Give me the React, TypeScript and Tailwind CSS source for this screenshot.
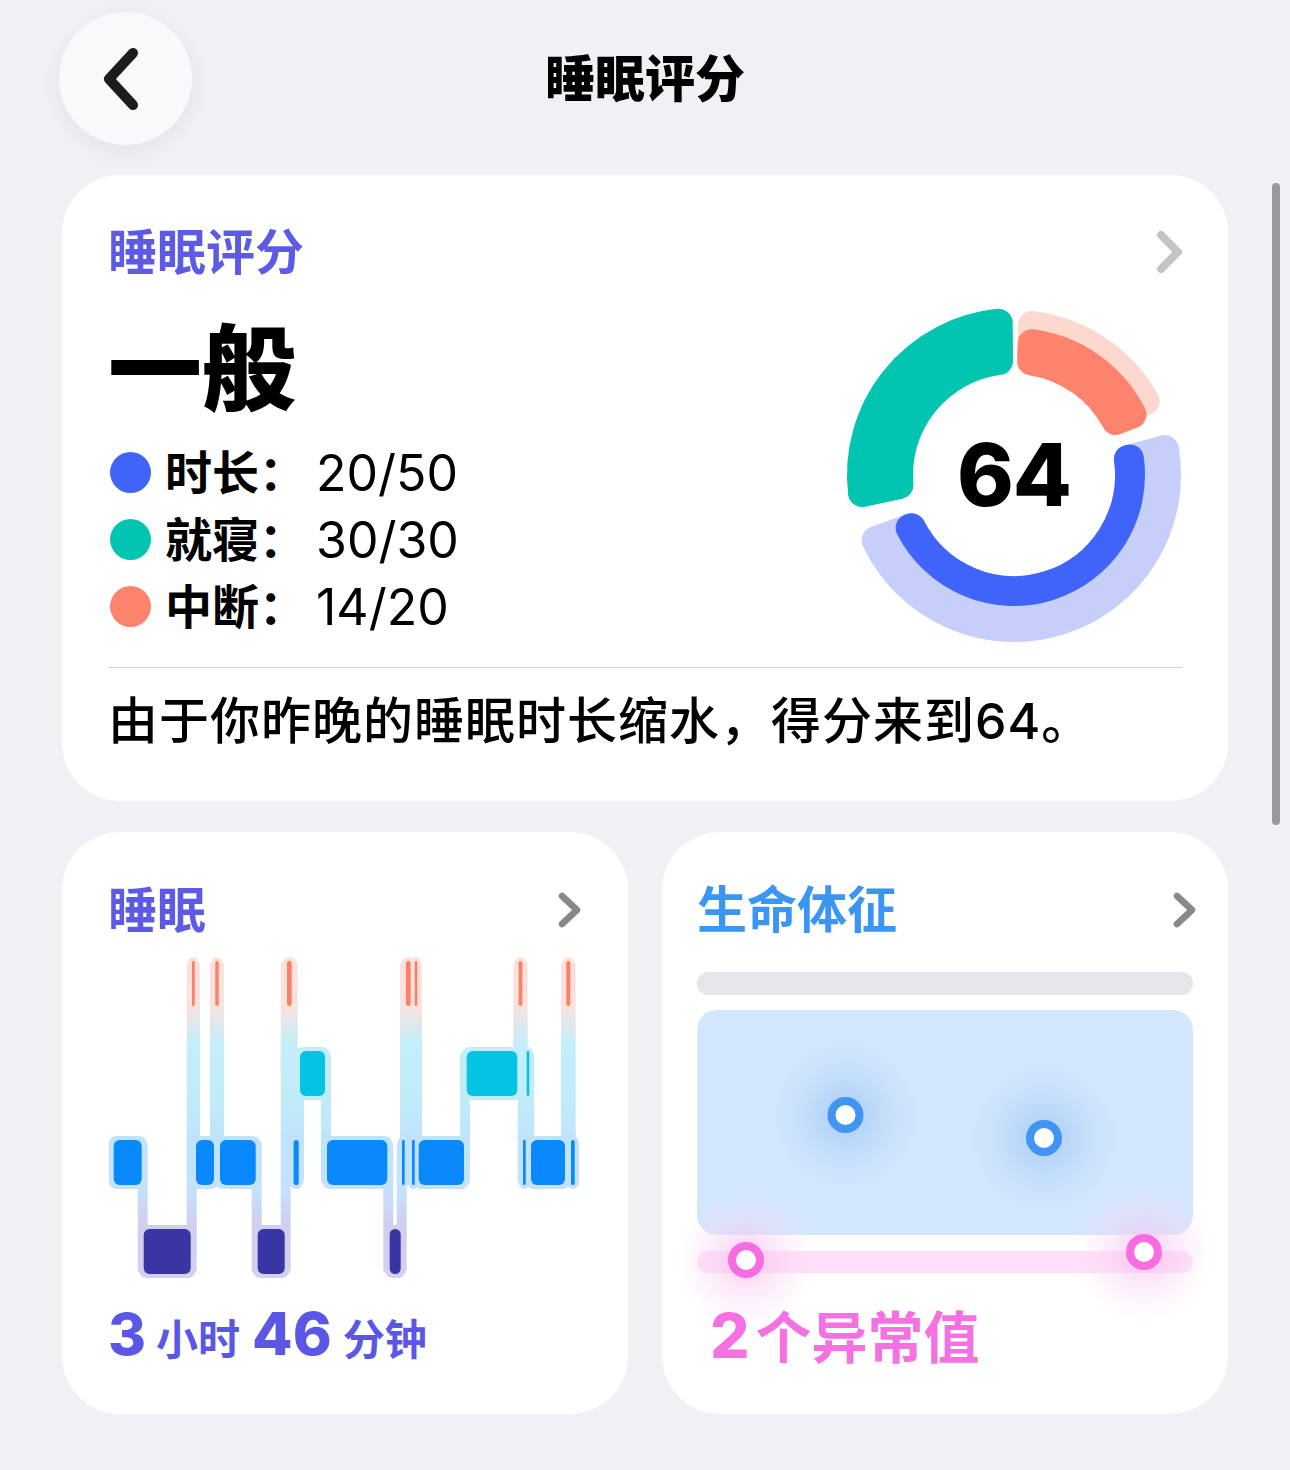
import React from "react";

type Stage = "awake" | "rem" | "core" | "deep";

const LEVELS: Record<Stage, [number, number]> = {
  awake: [962, 1007],
  rem: [1052, 1097],
  core: [1141, 1186],
  deep: [1230, 1275],
};

const STAGE_FILL: Record<Stage, string> = {
  awake: "#fa806a",
  rem: "#05c3e4",
  core: "#0a89fb",
  deep: "#3935a4",
};

// [stage, start x, end x] along the night
const SEGMENTS: [Stage, number, number][] = [
  ["core", 112.7, 142.7],
  ["deep", 142.7, 191.7],
  ["awake", 191.7, 195],
  ["core", 195, 215],
  ["awake", 215, 219],
  ["core", 219, 256.7],
  ["deep", 256.7, 285.7],
  ["awake", 286, 292.7],
  ["core", 293.3, 299],
  ["rem", 299, 326],
  ["core", 326, 388.3],
  ["deep", 388.7, 401.7],
  ["core", 401.7, 405],
  ["awake", 405, 411.7],
  ["core", 411.7, 415],
  ["awake", 415, 417],
  ["core", 417.7, 465],
  ["rem", 465.7, 518.3],
  ["awake", 518.3, 522.7],
  ["core", 522.7, 526],
  ["rem", 526.7, 529.3],
  ["core", 530, 566],
  ["awake", 566, 570.7],
  ["core", 570.7, 575],
];

function Hypnogram() {
  return (
    <svg width={490} height={340} viewBox="100 950 490 340" className="block -ml-[8px] mt-[15px]">
      <defs>
        <linearGradient id="sleepHalo" gradientUnits="userSpaceOnUse" x1="0" y1="956" x2="0" y2="1282">
          <stop offset="0" stopColor="#fde0da" />
          <stop offset="0.15" stopColor="#fbe2de" />
          <stop offset="0.27" stopColor="#c4eef9" />
          <stop offset="0.44" stopColor="#c0ecf8" />
          <stop offset="0.56" stopColor="#c0e3fd" />
          <stop offset="0.71" stopColor="#c4e2fd" />
          <stop offset="0.83" stopColor="#cfcfee" />
          <stop offset="1" stopColor="#d3d1ef" />
        </linearGradient>
      </defs>
      <g fill="url(#sleepHalo)">
        {SEGMENTS.map(([s, x0, x1], i) => {
          const [y0, y1] = LEVELS[s];
          return <rect key={`h${i}`} x={x0 - 4} y={y0 - 4} width={x1 - x0 + 8} height={y1 - y0 + 8} rx={8} />;
        })}
        {SEGMENTS.slice(0, -1).map(([s, , x1], i) => {
          const next = SEGMENTS[i + 1][0];
          const top = Math.min(LEVELS[s][0], LEVELS[next][0]);
          const bottom = Math.max(LEVELS[s][1], LEVELS[next][1]);
          return <rect key={`c${i}`} x={x1 - 5} y={top} width={10} height={bottom - top} rx={5} />;
        })}
      </g>
      {SEGMENTS.map(([s, x0, x1], i) => {
        const [y0, y1] = LEVELS[s];
        const full = x1 - x0;
        const w = full > 6 ? full - 2 : Math.max(full - 0.6, 2.6);
        const x = x0 + (full - w) / 2;
        return (
          <rect
            key={`s${i}`}
            x={x}
            y={y0}
            width={w}
            height={y1 - y0}
            rx={Math.min(6, w / 2)}
            fill={STAGE_FILL[s]}
          />
        );
      })}
    </svg>
  );
}

// annular sector with rounded corners: inset geometry, then a round-joined stroke of width 2c
function sectorPath(cx: number, cy: number, r0: number, r1: number, a0: number, a1: number, c: number) {
  const ri = r0 + c;
  const ro = r1 - c;
  const rad = (d: number) => (d * Math.PI) / 180;
  const off = (r: number) => (Math.asin(Math.min(1, c / r)) * 180) / Math.PI;
  const pt = (r: number, a: number) => `${cx + r * Math.sin(rad(a))} ${cy - r * Math.cos(rad(a))}`;
  const so = a0 + off(ro);
  const eo = a1 - off(ro);
  const si = a0 + off(ri);
  const ei = a1 - off(ri);
  const lo = eo - so > 180 ? 1 : 0;
  const li = ei - si > 180 ? 1 : 0;
  if (ro - ri < 0.5) {
    return `M${pt(ro, so)} A${ro} ${ro} 0 ${lo} 1 ${pt(ro, eo)}`;
  }
  return `M${pt(ro, so)} A${ro} ${ro} 0 ${lo} 1 ${pt(ro, eo)} L${pt(ri, ei)} A${ri} ${ri} 0 ${li} 0 ${pt(ri, si)} Z`;
}

function Arc({ r0, r1, a0, a1, color, c = 14 }: { r0: number; r1: number; a0: number; a1: number; color: string; c?: number }) {
  const cc = Math.min(c, (r1 - r0) / 2);
  return (
    <path
      d={sectorPath(170, 170, r0, r1, a0, a1, cc)}
      fill={color}
      stroke={color}
      strokeWidth={cc * 2}
      strokeLinejoin="round"
      strokeLinecap="round"
    />
  );
}

function ScoreRing() {
  return (
    <div className="relative -mr-[2px] mt-[29px] h-[340px] w-[340px] shrink-0">
      <svg width={340} height={340} viewBox="0 0 340 340" className="block">
        <Arc r0={101} r1={167} a0={75} a1={250} color="#c6cffa" />
        <Arc r0={101} r1={131} a0={75} a1={250} color="#4064f9" />
        <Arc r0={101} r1={167} a0={258} a1={359.5} color="#02c5b1" />
        <Arc r0={101} r1={165} a0={1.6} a1={66} color="#fdd8cf" />
        <Arc r0={101} r1={147} a0={1.6} a1={69} color="#fd836d" />
      </svg>
      <div className="absolute inset-0 flex items-center justify-center">
        <span className="text-[86px] font-extrabold leading-none tracking-[-1px] text-black">64</span>
      </div>
    </div>
  );
}

function VitalsChart() {
  return (
    <svg width={530} height={335} viewBox="680 955 530 335" className="block -ml-[17px] mt-[20px] overflow-visible">
      <defs>
        <radialGradient id="blueGlow">
          <stop offset="0" stopColor="#a6cbf7" stopOpacity="1" />
          <stop offset="0.35" stopColor="#b3d3f8" stopOpacity="0.7" />
          <stop offset="1" stopColor="#c6def9" stopOpacity="0" />
        </radialGradient>
        <radialGradient id="pinkGlow">
          <stop offset="0" stopColor="#f7b6ed" stopOpacity="0.8" />
          <stop offset="0.4" stopColor="#f9c8f1" stopOpacity="0.45" />
          <stop offset="1" stopColor="#fbdcf6" stopOpacity="0" />
        </radialGradient>
      </defs>
      <rect x={697} y={973} width={496} height={23} rx={11.5} fill="#e5e5ea" />
      <rect x={697} y={1011} width={496} height={225} rx={20} fill="#d3e7fc" />
      <circle cx={845.5} cy={1116} r={80} fill="url(#blueGlow)" />
      <circle cx={1044} cy={1139} r={80} fill="url(#blueGlow)" />
      <rect x={697} y={1252} width={496} height={22} rx={11} fill="#fde0f8" />
      <circle cx={746} cy={1261} r={70} fill="url(#pinkGlow)" />
      <circle cx={1144} cy={1253} r={70} fill="url(#pinkGlow)" />
      <circle cx={845.5} cy={1116} r={14} fill="#ffffff" stroke="#3f95f1" strokeWidth={8} />
      <circle cx={1044} cy={1139} r={14} fill="#ffffff" stroke="#3f95f1" strokeWidth={8} />
      <circle cx={746} cy={1261} r={14} fill="#ffffff" stroke="#f76de1" strokeWidth={8} />
      <circle cx={1144} cy={1253} r={14} fill="#ffffff" stroke="#f76de1" strokeWidth={8} />
    </svg>
  );
}

function ChevronRight({ light }: { light?: boolean }) {
  return light ? (
    <svg width={34} height={48} viewBox="0 0 34 48" className="block">
      <path d="M9 7 L26 24 L9 41" fill="none" stroke="#c4c4c8" strokeWidth={8} strokeLinecap="round" strokeLinejoin="round" />
    </svg>
  ) : (
    <svg width={28} height={42} viewBox="0 0 28 42" className="block">
      <path d="M6 7 L21 21 L6 35" fill="none" stroke="#88888c" strokeWidth={6.5} strokeLinecap="round" strokeLinejoin="round" />
    </svg>
  );
}

const LEGEND = [
  { label: "时长：", value: "20/50", color: "bg-[#4064f9]" },
  { label: "就寝：", value: "30/30", color: "bg-[#02c5b1]" },
  { label: "中断：", value: "14/20", color: "bg-[#fd836d]" },
];

export default function App() {
  return (
    <div className="relative min-h-[1470px] w-[1290px] overflow-hidden bg-[#f0f0f5] font-[family-name:Inter,'Noto_Sans_CJK_SC',sans-serif] text-black">
      {/* navigation bar */}
      <div className="grid grid-cols-[133px_1fr_133px] items-center px-[59px] pt-[12px]">
        <button className="flex h-[133px] w-[133px] items-center justify-center rounded-full bg-[#f9f9fb] shadow-[0_6px_24px_rgba(0,0,0,0.06)]">
          <svg width={44} height={68} viewBox="0 0 44 68" className="mr-[12px] block">
            <path d="M35 8 L11 34 L35 60" fill="none" stroke="#1c1c1e" strokeWidth={10} strokeLinecap="round" strokeLinejoin="round" />
          </svg>
        </button>
        <h1 className="text-center text-[50px] font-black leading-none">睡眠评分</h1>
        <div />
      </div>

      {/* score card */}
      <section className="mx-[62px] mt-[30px] rounded-[58px] bg-white px-[46px] pb-[55px] pt-[53px]">
        <div className="flex h-[48px] items-center justify-between">
          <h2 className="text-[49px] font-bold leading-none text-[#5d5ae6]">睡眠评分</h2>
          <div className="-mr-[4px]">
            <ChevronRight light />
          </div>
        </div>
        <div className="flex items-start justify-between">
          <div className="pt-[47px]">
            <div className="text-[94px] font-black leading-none">一般</div>
            <div className="mt-[22px]">
              {LEGEND.map((row) => (
                <div key={row.label} className="flex h-[67px] items-center">
                  <span className={`ml-[2px] h-[41px] w-[41px] shrink-0 rounded-full ${row.color}`} />
                  <span className="ml-[14px] text-[47px] font-bold leading-none">{row.label}</span>
                  <span className="ml-[10px] text-[50px] font-normal leading-none">{row.value}</span>
                </div>
              ))}
            </div>
          </div>
          <ScoreRing />
        </div>
        <div className="mt-[22px] h-px bg-[#d1d1d6]" />
        <p className="mt-[28px] text-[50px] font-medium leading-none tracking-[1px]">
          由于你昨晚的睡眠时长缩水，得分来到64。
        </p>
      </section>

      {/* summary cards */}
      <div className="mx-[62px] mt-[31px] grid grid-cols-2 gap-[34px]">
        <section className="h-[582px] rounded-[58px] bg-white px-[46px] pt-[54px]">
          <div className="flex h-[48px] items-center justify-between">
            <h2 className="text-[49px] font-bold leading-none text-[#5d5ae6]">睡眠</h2>
            <div className="-mr-[2px]">
              <ChevronRight />
            </div>
          </div>
          <Hypnogram />
          <div className="mt-[15px] flex items-baseline leading-none text-[#5b57e6]">
            <span className="text-[58px] font-extrabold">3</span>
            <span className="ml-[10px] text-[42px] font-bold">小时</span>
            <span className="ml-[12px] text-[59px] font-extrabold">46</span>
            <span className="ml-[11px] text-[42px] font-bold">分钟</span>
          </div>
        </section>

        <section className="h-[582px] rounded-[58px] bg-white px-[35px] pt-[54px]">
          <div className="flex h-[48px] items-center justify-between">
            <h2 className="text-[50px] font-bold leading-none text-[#3b95f3]">生命体征</h2>
            <div className="-mr-[6px]">
              <ChevronRight />
            </div>
          </div>
          <VitalsChart />
          <div className="mt-[16px] flex items-baseline pl-[13px] leading-none text-[#f570e1]">
            <span className="text-[62px] font-extrabold">2</span>
            <span className="ml-[6px] text-[56px] font-bold">个异常值</span>
          </div>
        </section>
      </div>

      {/* scroll indicator */}
      <div className="absolute right-[10px] top-[183px] h-[642px] w-[8px] rounded-full bg-[#98989d]" />
    </div>
  );
}
